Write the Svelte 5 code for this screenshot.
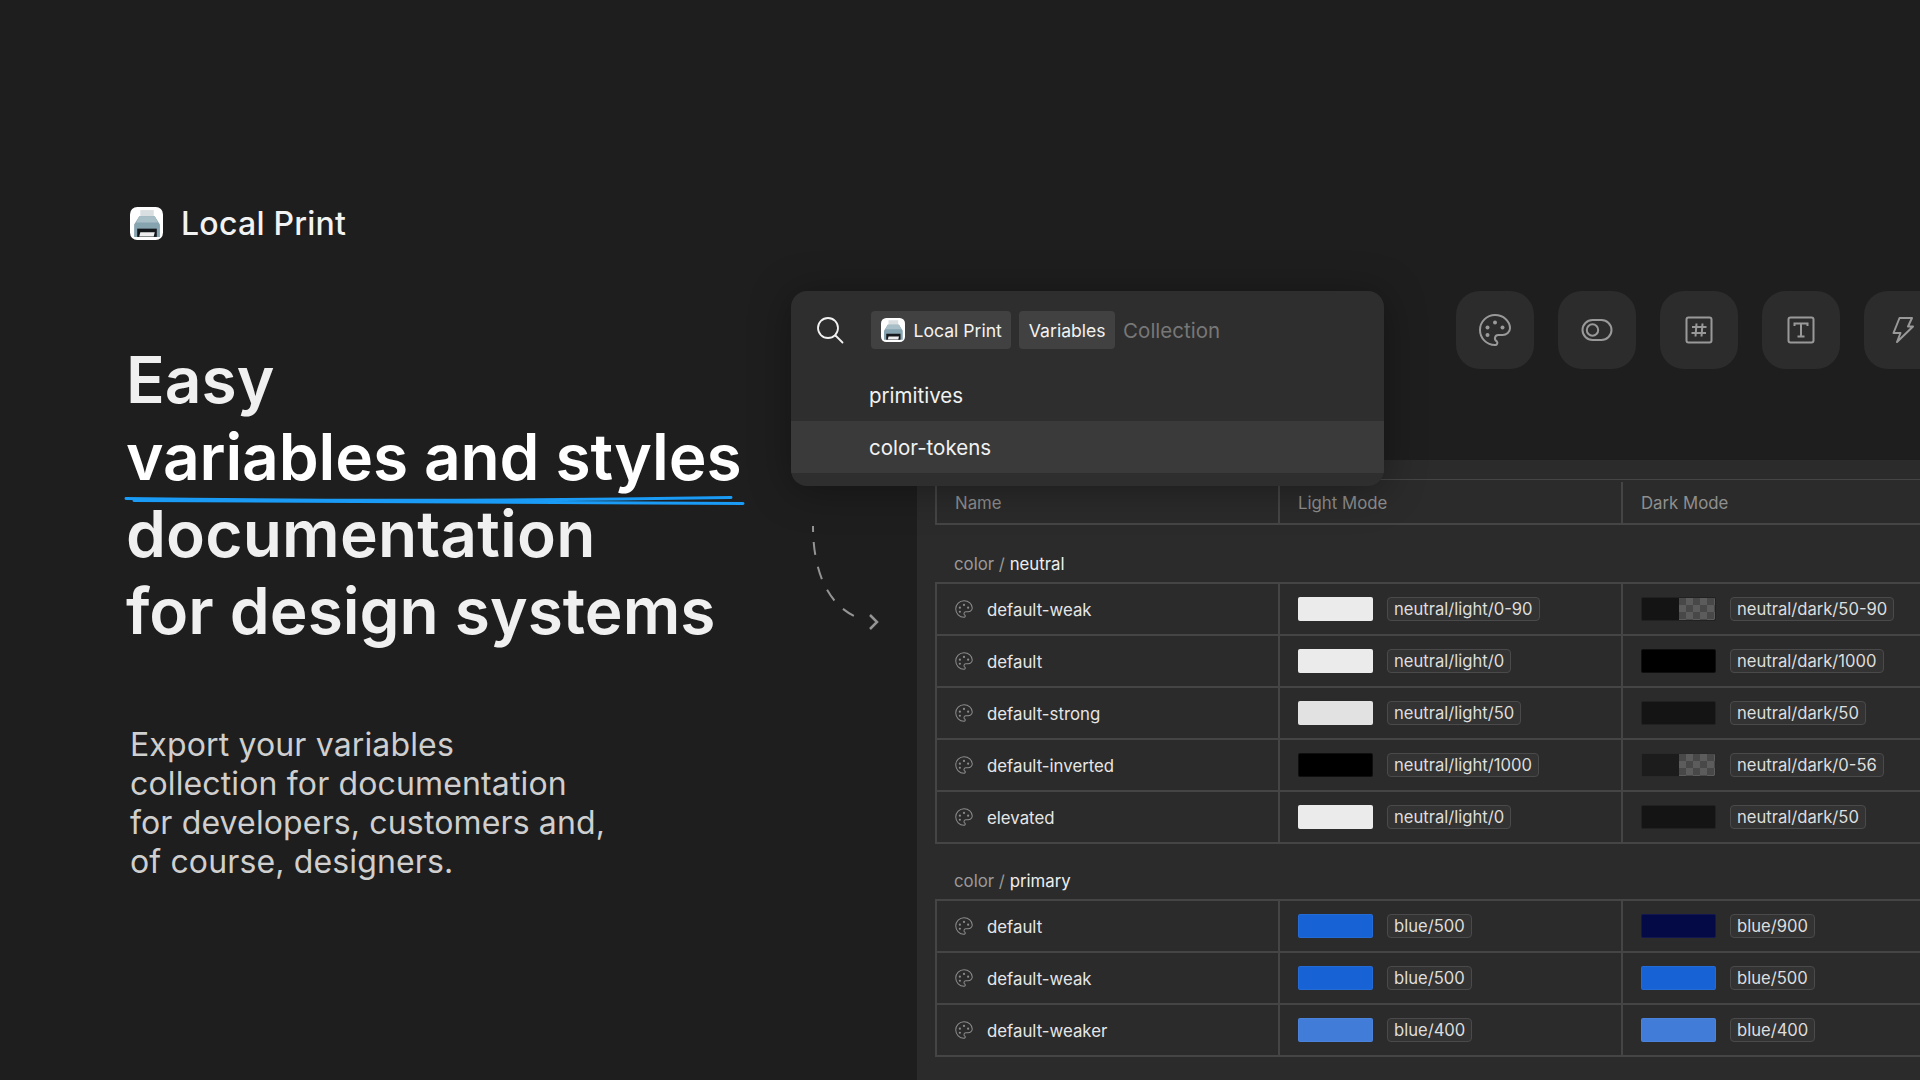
<script lang="ts">
	const palettePath =
		'M12 21a9 9 0 0 1 0 -18c4.97 0 9 3.582 9 8c0 1.06 -.474 2.078 -1.318 2.828c-.844 .75 -1.989 1.172 -3.182 1.172h-2.5a2 2 0 0 0 -1 3.75a1.3 1.3 0 0 1 -1 2.25';

	const groups = [
		{
			name: 'neutral',
			rows: [
				{ name: 'default-weak', light: '#ebebeb', lightTag: 'neutral/light/0-90', dark: '#141414', darkTag: 'neutral/dark/50-90', alpha: true },
				{ name: 'default', light: '#ebebeb', lightTag: 'neutral/light/0', dark: '#000000', darkTag: 'neutral/dark/1000' },
				{ name: 'default-strong', light: '#e2e2e2', lightTag: 'neutral/light/50', dark: '#141414', darkTag: 'neutral/dark/50' },
				{ name: 'default-inverted', light: '#000000', lightTag: 'neutral/light/1000', dark: '#1c1c1c', darkTag: 'neutral/dark/0-56', alpha: true },
				{ name: 'elevated', light: '#ebebeb', lightTag: 'neutral/light/0', dark: '#141414', darkTag: 'neutral/dark/50' }
			]
		},
		{
			name: 'primary',
			rows: [
				{ name: 'default', light: '#1762d4', lightTag: 'blue/500', dark: '#040a45', darkTag: 'blue/900' },
				{ name: 'default-weak', light: '#1762d4', lightTag: 'blue/500', dark: '#1762d4', darkTag: 'blue/500' },
				{ name: 'default-weaker', light: '#417cd8', lightTag: 'blue/400', dark: '#417cd8', darkTag: 'blue/400' }
			]
		}
	];
</script>

{#snippet printer(size)}
	<svg class="app-icon" width={size} height={size} viewBox="0 0 32 32" aria-hidden="true">
		<rect width="32" height="32" rx="7" fill="#fff" />
		<path d="M10 3h13v9H10z" fill="#d9dee0" />
		<path d="M9 9h15l5 8v12H4V17z" fill="#86a3b0" />
		<path d="M9 9h15l3 6H6z" fill="#a9bfc8" />
		<rect x="7" y="21" width="19" height="8" fill="#14181a" />
		<path d="M10 24.500h14l-1 4H9z" fill="#eeeeee" />
	</svg>
{/snippet}

{#snippet palette(size, weight)}
	<svg width={size} height={size} viewBox="0 0 24 24" fill="none" stroke="currentColor" stroke-width={weight} stroke-linecap="round" stroke-linejoin="round" aria-hidden="true">
		<path d={palettePath} />
		<circle cx="7.500" cy="10.500" r="1.200" fill="currentColor" stroke="none" />
		<circle cx="12" cy="7.500" r="1.200" fill="currentColor" stroke="none" />
		<circle cx="16.500" cy="10.500" r="1.200" fill="currentColor" stroke="none" />
		<circle cx="7.500" cy="15" r="1.200" fill="currentColor" stroke="none" />
	</svg>
{/snippet}

<div class="page">
	<section class="intro">
		<div class="brand">
			{@render printer(33)}
			<span>Local Print</span>
		</div>
		<h1>
			Easy<br />
			<span class="strong">variables and styles</span><br />
			<span class="wide">documentation</span><br />
			for design systems
		</h1>
		<p>
			Export your variables<br />
			collection for documentation<br />
			for developers, customers and,<br />
			of course, designers.
		</p>
	</section>

	<section class="work">
		<div class="tools">
			<div class="tool">{@render palette(40, 1.2)}</div>
			<div class="tool">
				<svg width="32" height="32" viewBox="0 0 32 32" fill="none" stroke="currentColor" stroke-width="2">
					<rect x="1.500" y="6" width="29" height="20" rx="10" />
					<circle cx="11.500" cy="16" r="5.700" />
				</svg>
			</div>
			<div class="tool">
				<svg width="32" height="32" viewBox="0 0 32 32" fill="none" stroke="currentColor" stroke-width="2">
					<rect x="3.500" y="3.500" width="25" height="25" rx="2" />
					<path d="M13.500 9.500l-1 13M19.500 9.500l-1 13M9 13h14.500M8.500 19h14.500" />
				</svg>
			</div>
			<div class="tool">
				<svg width="32" height="32" viewBox="0 0 32 32" fill="none" stroke="currentColor" stroke-width="2">
					<rect x="3.500" y="3.500" width="25" height="25" rx="2" />
					<path d="M9.500 12v-2.500h13V12M16 9.500v13M12.500 22.500h7" />
				</svg>
			</div>
			<div class="tool">
				<svg width="32" height="32" viewBox="0 0 32 32" fill="none" stroke="currentColor" stroke-width="2" stroke-linejoin="round">
					<path d="M12.500 4H25l-4 8.500h5L10 28l3.500-9h-7z" />
				</svg>
			</div>
		</div>

		<div class="sheet">
			<div class="grid head">
				<div class="cell">Name</div>
				<div class="cell">Light Mode</div>
				<div class="cell">Dark Mode</div>
			</div>
			{#each groups as group}
				<div class="group-label">color <span>/</span> <b>{group.name}</b></div>
				<div class="table">
					{#each group.rows as row}
						<div class="grid row">
							<div class="cell name">
								{@render palette(22, 1.1)}
								<span>{row.name}</span>
							</div>
							<div class="cell">
								<span class="swatch" style:background={row.light}></span>
								<span class="tag">{row.lightTag}</span>
							</div>
							<div class="cell">
								<span class="swatch" class:alpha={row.alpha} style:background={row.dark}></span>
								<span class="tag">{row.darkTag}</span>
							</div>
						</div>
					{/each}
				</div>
			{/each}
		</div>
	</section>

	<!-- hand drawn underline below the second heading line -->
	<svg class="scribble" width="640" height="20" viewBox="0 0 640 20" fill="none" stroke="#1a9bf5" stroke-width="3" stroke-linecap="round" aria-hidden="true">
		<path d="M2 8.500C200 11 400 11 607 7.500" />
		<path d="M10 10.500C200 13 400 13 619 13.500" />
	</svg>

	<svg class="arrow" width="80" height="110" viewBox="0 0 80 110" fill="none" stroke="#949494" stroke-width="2" aria-hidden="true">
		<path d="M7 6C7 48 20 88 57 99.500" stroke-dasharray="6 10 13 12 13 12 13 12 13 12 13 12" />
		<path d="M64 95l7 7l-7 7" stroke-width="2.500" />
	</svg>

	<div class="finder">
		<div class="search">
			<svg class="lens" width="28" height="28" viewBox="0 0 28 28" fill="none" stroke="#f2f2f2" stroke-width="1.800" stroke-linecap="round">
				<circle cx="12" cy="12" r="10" />
				<path d="M19.500 19.500l7 7" />
			</svg>
			<span class="chip">{@render printer(24)} Local Print</span>
			<span class="chip">Variables</span>
			<span class="hint">Collection</span>
		</div>
		<div class="option">primitives</div>
		<div class="option active">color-tokens</div>
	</div>
</div>

<style>
	:global(body) {
		margin: 0;
		background: #1e1e1e;
	}

	.page {
		position: relative;
		display: flex;
		width: 1920px;
		height: 1080px;
		overflow: hidden;
		background: #1e1e1e;
		font-family: Inter, 'Liberation Sans', sans-serif;
	}

	.intro {
		flex: 0 0 917px;
		box-sizing: border-box;
		padding: 207px 0 0 130px;
	}

	.brand {
		display: flex;
		align-items: center;
		gap: 18px;
		height: 32px;
		font-size: 32px;
		font-weight: 500;
		letter-spacing: 0.25px;
		color: #f2f2f2;
	}

	.app-icon {
		display: block;
		flex: none;
	}

	h1 {
		margin: 102px 0 0 -4px;
		font-size: 64px;
		line-height: 77px;
		font-weight: 600;
		color: #f0f0f0;
	}

	.strong {
		letter-spacing: -0.12px;
		color: #fff;
	}

	.wide {
		letter-spacing: 0.18px;
	}

	p {
		margin: 76px 0 0;
		font-size: 32px;
		line-height: 39px;
		letter-spacing: 0.14px;
		color: #cfcfcf;
	}

	.work {
		flex: 1;
		min-width: 0;
		padding-top: 291px;
	}

	.tools {
		display: flex;
		gap: 24px;
		padding-left: 539px;
	}

	.tool {
		flex: none;
		display: grid;
		place-items: center;
		width: 78px;
		height: 78px;
		border-radius: 24px;
		background: #2c2c2c;
		color: #999;
	}

	.sheet {
		box-sizing: border-box;
		width: 1040px;
		height: 640px;
		margin-top: 91px;
		padding: 19px 0 0 18px;
		background: #2b2b2b;
		font-size: 16.800px;
		color: #e6e6e6;
	}

	.grid {
		display: grid;
		grid-template-columns: 343px 343px 1fr;
	}

	.head {
		height: 46px;
		box-sizing: border-box;
		padding-top: 2px;
		border: 2px solid #454545;
		border-width: 1px 0 2px 2px;
		color: #8f8f8f;
	}

	.cell {
		display: flex;
		align-items: center;
		gap: 14px;
		padding-left: 18px;
		border-right: 2px solid #454545;
	}

	.cell:last-child {
		border-right: 0;
	}

	.group-label {
		height: 57px;
		box-sizing: border-box;
		padding: 27px 0 0 19px;
		line-height: 24px;
		color: #999;
	}

	b {
		font-weight: 400;
		color: #eee;
	}

	.table {
		margin-bottom: -2px;
		border-top: 2px solid #454545;
		border-left: 2px solid #454545;
	}

	.row {
		box-sizing: border-box;
		height: 52px;
		border-bottom: 2px solid #454545;
	}

	.name {
		gap: 12px;
		padding-left: 16px;
		color: #8c8c8c;
	}

	.name span {
		padding-top: 1px;
		color: #e6e6e6;
	}

	.swatch {
		position: relative;
		flex: none;
		box-sizing: border-box;
		width: 75px;
		height: 24px;
		overflow: hidden;
		border-radius: 2px;
		border: 1px solid rgba(255, 255, 255, 0.06);
	}

	.swatch.alpha::after {
		content: '';
		position: absolute;
		top: 0;
		right: 0;
		bottom: 0;
		width: 50%;
		background: repeating-conic-gradient(#5c5c5c 0 25%, #484848 0 50%) 0 0 / 14px 14px;
	}

	.tag {
		box-sizing: border-box;
		height: 24px;
		padding: 0 6px;
		border: 1px solid #4a4a4a;
		border-radius: 4px;
		background: #333;
		font-size: 16.600px;
		line-height: 22px;
		color: #dedede;
		white-space: nowrap;
	}

	.scribble {
		position: absolute;
		left: 124px;
		top: 490px;
	}

	.arrow {
		position: absolute;
		left: 806px;
		top: 520px;
	}

	.finder {
		position: absolute;
		left: 791px;
		top: 291px;
		width: 593px;
		height: 195px;
		overflow: hidden;
		border-radius: 16px;
		background: #2e2e2e;
		box-shadow: 0 4px 40px rgba(0, 0, 0, 0.35);
		color: #f2f2f2;
		font-size: 20.500px;
	}

	.search {
		display: flex;
		align-items: center;
		gap: 8px;
		height: 78px;
		padding-left: 25px;
		font-size: 17.600px;
	}

	.lens {
		flex: none;
		margin-right: 19px;
	}

	.chip {
		display: flex;
		align-items: center;
		gap: 9px;
		height: 38px;
		padding: 0 9.500px;
		border-radius: 4px;
		background: #414141;
	}

	.hint {
		font-size: 20.500px;
		color: #777;
	}

	.option {
		height: 52px;
		padding-left: 78px;
		line-height: 54px;
	}

	.option.active {
		background: #3a3a3a;
	}
</style>
